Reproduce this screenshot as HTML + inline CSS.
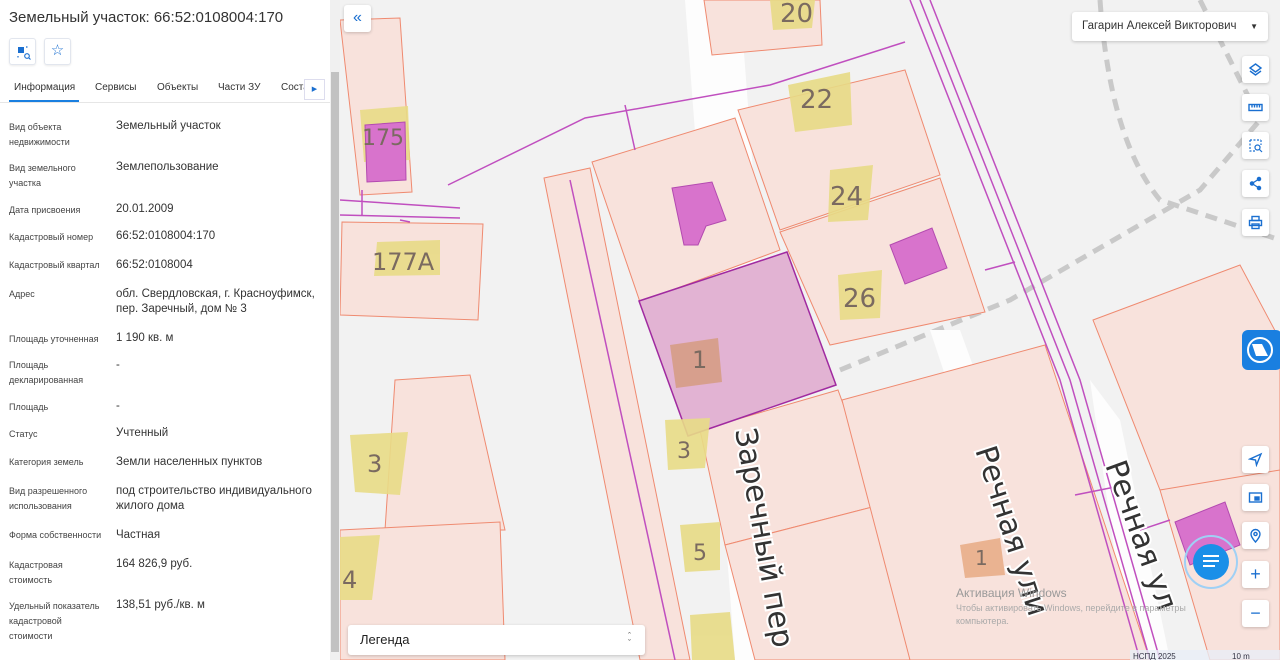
<!DOCTYPE html>
<html><head><meta charset="utf-8"><style>
*{margin:0;padding:0;box-sizing:border-box}
body{width:1280px;height:660px;overflow:hidden;font-family:"Liberation Sans",sans-serif;background:#f2f2f2;position:relative}
#panel{position:absolute;left:0;top:0;width:330px;height:660px;background:#fff;color:#333}
#sb{position:absolute;left:330px;top:0;width:10px;height:660px;background:#f0f0f0}
#sb div{position:absolute;left:1px;top:72px;width:8px;height:580px;background:#c2c2c2}
h1{position:absolute;left:9px;top:9px;font-size:15px;font-weight:normal;color:#333}
.ib{position:absolute;top:38px;width:27px;height:27px;border:1px solid #e2e6ee;border-radius:3px;background:#fff;box-shadow:0 1px 2px rgba(0,0,0,.08)}
.tabs{position:absolute;top:81px;left:0;width:330px;height:22px;border-bottom:1px solid #e6e6e6;font-size:10px;color:#333}
.tabs span{position:absolute;top:1px}
.row{position:absolute;left:9px;font-size:9px;line-height:15px;color:#444;width:97px}
.val{position:absolute;left:116px;font-size:11.5px;line-height:15px;color:#333;width:210px}
#map{position:absolute;left:340px;top:0}
.mb{position:absolute;background:#fff;border-radius:3px;box-shadow:0 1px 3px rgba(0,0,0,.2)}
.tb{left:1242px;width:27px;height:27px}
.tb svg{position:absolute;left:6px;top:6px}
</style></head><body>
<svg id="map" width="940" height="660" viewBox="340 0 940 660">
<rect x="340" y="0" width="940" height="660" fill="#f2f2f2"/>
<g fill="none" stroke="#c9c9c9" stroke-width="5" stroke-dasharray="12 8">
<path d="M1100 0 Q1110 140 1160 200 L1280 240"/>
<path d="M1200 0 Q1240 80 1250 100"/>
<path d="M840 370 L1010 300 L1200 190 L1260 120"/>
</g>
<g fill="#fdfdfd"><path d="M685 0 L740 0 L790 660 L735 660Z"/><path d="M930 330 L960 330 L1080 660 L1040 660Z"/><path d="M1090 380 L1120 420 L1170 660 L1130 660Z"/></g>
<g fill="#f8e2dc" stroke="#ef8a70" stroke-width="1">
<path d="M340 20 L400 18 L412 192 L360 195Z"/>
<path d="M342 222 L483 224 L478 320 L340 315Z"/>
<path d="M704 0 L820 0 L822 45 L712 55Z"/>
<path d="M592 162 L735 118 L780 250 L640 302Z"/>
<path d="M738 110 L905 70 L940 175 L780 230Z"/>
<path d="M780 232 L940 178 L985 312 L830 345Z"/>
<path d="M544 178 L590 168 L690 660 L640 660Z"/>
<path d="M700 430 L838 390 L880 505 L725 545Z"/>
<path d="M725 545 L880 505 L910 660 L755 660Z"/>
<path d="M842 400 L1045 345 L1150 660 L910 660Z"/>
<path d="M395 380 L470 375 L505 530 L385 530Z"/>
<path d="M340 530 L500 522 L505 660 L340 660Z"/>
<path d="M1093 320 L1240 265 L1280 340 L1280 480 L1160 490Z"/>
<path d="M1160 490 L1280 470 L1280 660 L1210 660Z"/>
</g>
<path d="M639 301 L787 252 L836 385 L688 436Z" fill="#e2b3d3" stroke="#a02aa0" stroke-width="1.5"/>
<g fill="#e8db86" opacity=".9">
<path d="M770 0 L815 0 L812 28 L773 30Z"/><path d="M788 85 L850 72 L852 125 L795 132Z"/>
<path d="M360 110 L408 106 L410 160 L364 162Z"/><path d="M377 242 L440 240 L440 275 L374 276Z"/>
<path d="M830 170 L873 165 L868 220 L828 222Z"/><path d="M838 275 L882 270 L880 318 L840 320Z"/>
<path d="M665 420 L710 418 L705 468 L668 470Z"/><path d="M350 435 L408 432 L400 495 L355 492Z"/>
<path d="M340 537 L380 535 L372 600 L340 600Z"/><path d="M680 525 L720 522 L720 570 L685 572Z"/>
<path d="M690 615 L730 612 L735 660 L692 660Z"/>
</g>
<path d="M670 345 L718 338 L722 382 L676 388Z" fill="#d49a7c" opacity=".8"/>
<path d="M960 545 L1000 538 L1005 575 L965 578Z" fill="#e4a070" opacity=".7"/>
<g fill="#d873cc" stroke="#b34ab0"><path d="M365 125 L405 122 L406 180 L367 182Z"/><path d="M672 188 L712 182 L726 220 L706 226 L698 245 L684 245Z"/><path d="M890 245 L932 228 L947 268 L905 284Z"/><path d="M1175 522 L1225 502 L1240 545 L1190 565Z"/></g>
<g fill="none" stroke="#c04fbf" stroke-width="1.5">
<path d="M448 185 L585 118 L770 85 L905 42"/><path d="M340 200 L460 208 M340 215 L460 218 M362 190 L362 215 M400 220 L410 222"/>
<path d="M625 105 L635 150"/>
<path d="M570 180 L675 660"/>
<path d="M910 0 L1060 380 L1140 660 M920 0 L1070 380 L1150 660 M930 0 L1080 380 L1160 660"/>
<path d="M985 270 L1015 262 M1075 495 L1125 485 M1140 530 L1170 520"/>
</g>
<g font-family="DejaVu Sans,sans-serif" fill="#7a6a60" font-size="26">
<text x="780" y="22">20</text><text x="800" y="108">22</text><text x="362" y="145" font-size="22">175</text><text x="372" y="270" font-size="24">177А</text>
<text x="830" y="205">24</text><text x="843" y="307">26</text><text x="692" y="368" font-size="24">1</text><text x="677" y="458" font-size="22">3</text>
<text x="367" y="472" font-size="24">3</text><text x="342" y="588" font-size="24">4</text><text x="693" y="560" font-size="22">5</text><text x="975" y="565" font-size="20">1</text>
</g>
<g font-family="DejaVu Sans,sans-serif" font-size="30" fill="#333" stroke="#fff" stroke-width="4" paint-order="stroke">
<text transform="translate(735,430) rotate(80)">Заречный пер</text>
<text transform="translate(975,450) rotate(72)">Речная ули</text>
<text transform="translate(1105,465) rotate(70)">Речная ул</text>
</g>
<text x="956" y="597" font-size="12" fill="#999">Активация Windows</text>
<text x="956" y="611" font-size="9" fill="#aaa">Чтобы активировать Windows, перейдите в параметры</text>
<text x="956" y="624" font-size="9" fill="#aaa">компьютера.</text>
<rect x="1130" y="650" width="150" height="10" fill="#e8eef6" opacity=".8"/><text x="1133" y="659" font-size="8" fill="#334">НСПД 2025</text><text x="1232" y="659" font-size="8" fill="#334">10 m</text>
<rect x="1242" y="330" width="40" height="40" rx="6" fill="#1a7fe0"/><circle cx="1260" cy="350" r="12" fill="none" stroke="#fff" stroke-width="2"/><path d="M1252 344 L1262 344 L1268 356 L1256 356Z" fill="#fff"/>
<circle cx="1211" cy="562" r="26" fill="none" stroke="#9fd0f5" stroke-width="2"/><circle cx="1211" cy="562" r="18" fill="#1a8fe8"/>
<rect x="1203" y="555" width="16" height="2" fill="#fff"/><rect x="1203" y="560" width="16" height="2" fill="#fff"/><rect x="1203" y="565" width="12" height="2" fill="#fff"/>
</svg>
<div class="mb" style="left:344px;top:5px;width:27px;height:27px;color:#1a6fd0;font-size:16px;text-align:center;line-height:25px">«</div>
<div class="mb" style="left:1072px;top:12px;width:196px;height:29px;font-size:11.5px;color:#333;line-height:29px;padding-left:10px">Гагарин Алексей Викторович<span style="position:absolute;right:10px;font-size:8px">▼</span></div>
<div class="mb tb" style="top:56px"><svg width="15" height="15" viewBox="0 0 15 15" fill="none" stroke="#1a6fd0" stroke-width="1.4"><path d="M7.5 2 L13 6 L7.5 10 L2 6Z"/><path d="M2 9 L7.5 13 L13 9"/></svg></div>
<div class="mb tb" style="top:94px"><svg width="15" height="15" viewBox="0 0 15 15" fill="none" stroke="#1a6fd0" stroke-width="1.4"><rect x="1" y="4.5" width="13" height="6"/><path d="M4 4.5v3M6.5 4.5v3M9 4.5v3M11.5 4.5v3"/></svg></div>
<div class="mb tb" style="top:132px"><svg width="15" height="15" viewBox="0 0 15 15" fill="none" stroke="#1a6fd0" stroke-width="1.2"><path d="M2 2h11M2 2v11h6M13 2v5" stroke-dasharray="2 1.5"/><circle cx="9.5" cy="9.5" r="2.5"/><path d="M11.5 11.5L14 14"/></svg></div>
<div class="mb tb" style="top:170px"><svg width="15" height="15" viewBox="0 0 15 15" fill="#1a6fd0" stroke="#1a6fd0" stroke-width="1.3"><path d="M11 3 L4 7.5 L11 12" fill="none"/><circle cx="11" cy="3" r="1.6"/><circle cx="4" cy="7.5" r="1.6"/><circle cx="11" cy="12" r="1.6"/></svg></div>
<div class="mb tb" style="top:209px"><svg width="15" height="15" viewBox="0 0 15 15" fill="none" stroke="#1a6fd0" stroke-width="1.4"><rect x="4" y="1.5" width="7" height="4"/><rect x="1.5" y="5.5" width="12" height="5"/><rect x="4" y="9" width="7" height="4.5"/></svg></div>
<div class="mb tb" style="top:446px"><svg width="15" height="15" viewBox="0 0 15 15" fill="none" stroke="#1a6fd0" stroke-width="1.4"><path d="M13 2 L2 7 L7.5 8 L8.5 13Z"/></svg></div>
<div class="mb tb" style="top:484px"><svg width="15" height="15" viewBox="0 0 15 15" fill="none" stroke="#1a6fd0" stroke-width="1.4"><rect x="1.5" y="3" width="12" height="9"/><rect x="7" y="7" width="4" height="3" fill="#1a6fd0"/></svg></div>
<div class="mb tb" style="top:522px"><svg width="15" height="15" viewBox="0 0 15 15" fill="none" stroke="#1a6fd0" stroke-width="1.4"><path d="M7.5 14 C3 9 3 7 3 6 A4.5 4.5 0 0 1 12 6 C12 7 12 9 7.5 14Z"/><circle cx="7.5" cy="6" r="1.6"/></svg></div>
<div class="mb tb" style="top:561px;color:#1a6fd0;text-align:center;font-size:18px;line-height:26px">+</div>
<div class="mb tb" style="top:600px;color:#1a6fd0;text-align:center;font-size:18px;line-height:26px">−</div>
<div class="mb" style="left:348px;top:625px;width:297px;height:30px;font-size:13px;color:#222;line-height:30px;padding-left:12px">Легенда<span style="position:absolute;right:14px;top:0;font-size:9px;color:#555;line-height:7px;padding-top:8px;text-align:center">ˆ<br>ˇ</span></div>
<div id="panel">
<h1>Земельный участок: 66:52:0108004:170</h1>
<div class="ib" style="left:9px"><svg width="27" height="27" viewBox="0 0 27 27"><rect x="8" y="8" width="6" height="6" fill="#1a6fd0"/><path d="M16 8h3M8 17v2" stroke="#1a6fd0" stroke-width="1.2" stroke-dasharray="1.5 1.5"/><circle cx="17" cy="17" r="2.3" fill="none" stroke="#1a6fd0" stroke-width="1.1"/><path d="M18.6 18.6L20.5 20.5" stroke="#1a6fd0" stroke-width="1.1"/></svg></div>
<div class="ib" style="left:44px;color:#1a6fd0;text-align:center;line-height:24px;font-size:15px">☆</div>
<div class="tabs"><span style="left:14px">Информация</span><span style="left:95px">Сервисы</span><span style="left:157px">Объекты</span><span style="left:218px">Части ЗУ</span><span style="left:281px">Соста</span>
<div style="position:absolute;left:9px;top:19px;width:70px;height:2px;background:#1a7fe0"></div>
<div style="position:absolute;left:304px;top:-2px;width:21px;height:21px;background:#fff;border:1px solid #dde;color:#1a6fd0;font-size:7px;text-align:center;line-height:19px">▶</div></div>
<div class="row" style="top:120px">Вид объекта недвижимости</div><div class="val" style="top:119px">Земельный участок</div>
<div class="row" style="top:161px">Вид земельного участка</div><div class="val" style="top:160px">Землепользование</div>
<div class="row" style="top:203px">Дата присвоения</div><div class="val" style="top:202px">20.01.2009</div>
<div class="row" style="top:230px">Кадастровый номер</div><div class="val" style="top:229px">66:52:0108004:170</div>
<div class="row" style="top:258px">Кадастровый квартал</div><div class="val" style="top:258px">66:52:0108004</div>
<div class="row" style="top:287px">Адрес</div><div class="val" style="top:287px">обл. Свердловская, г. Красноуфимск, пер. Заречный, дом № 3</div>
<div class="row" style="top:332px">Площадь уточненная</div><div class="val" style="top:331px">1 190 кв. м</div>
<div class="row" style="top:358px">Площадь декларированная</div><div class="val" style="top:358px">-</div>
<div class="row" style="top:400px">Площадь</div><div class="val" style="top:399px">-</div>
<div class="row" style="top:427px">Статус</div><div class="val" style="top:426px">Учтенный</div>
<div class="row" style="top:455px">Категория земель</div><div class="val" style="top:455px">Земли населенных пунктов</div>
<div class="row" style="top:484px">Вид разрешенного использования</div><div class="val" style="top:484px">под строительство индивидуального жилого дома</div>
<div class="row" style="top:528px;white-space:nowrap">Форма собственности</div><div class="val" style="top:528px">Частная</div>
<div class="row" style="top:558px;width:80px">Кадастровая стоимость</div><div class="val" style="top:557px">164 826,9 руб.</div>
<div class="row" style="top:599px">Удельный показатель кадастровой стоимости</div><div class="val" style="top:598px">138,51 руб./кв. м</div>
</div>
<div id="sb"><div></div></div>
</body></html>
